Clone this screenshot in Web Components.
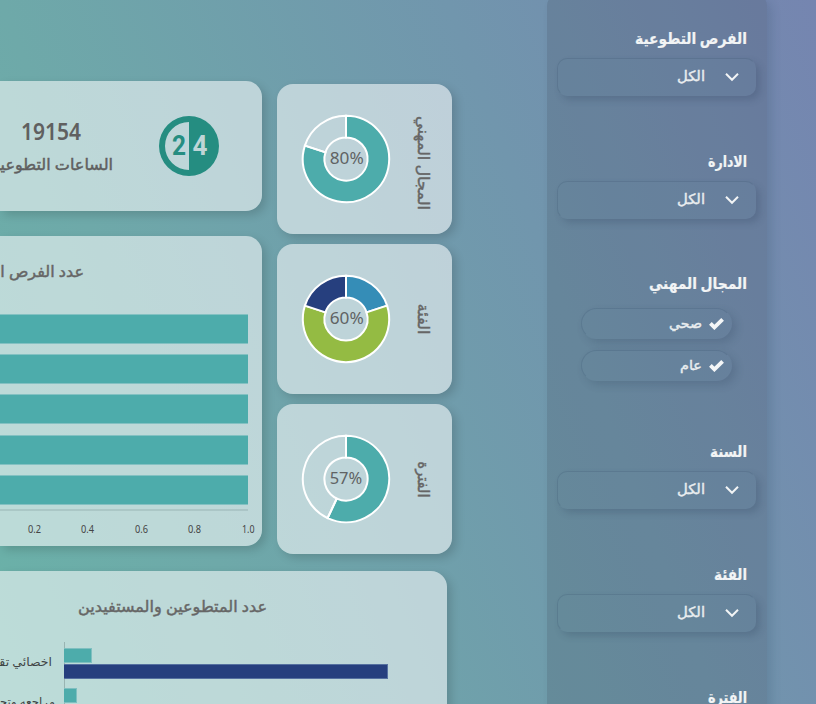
<!DOCTYPE html>
<html lang="ar">
<head>
<meta charset="utf-8">
<title>لوحة التطوع</title>
<style>
html,body{margin:0;height:704px;overflow:hidden}
body{font-family:"Noto Sans","DejaVu Sans",sans-serif}
</style>
</head>
<body>
<volunteer-dashboard></volunteer-dashboard>
<script>
const define = (name, build) => customElements.define(name, class extends HTMLElement {
  connectedCallback() {
    if (this.shadowRoot) return;
    this.attachShadow({ mode: 'open' }).innerHTML = build(k => this.getAttribute(k) || '');
  }
});

// One line of text fitted to a given width; b is the baseline offset, h the line box, s an outline that thickens strokes.
define('fit-text', a => `<style>
:host{display:block;flex:none;width:${a('w')}px;height:${a('h')}px}
svg{display:block;overflow:visible}
text{font:${a('weight') || 400} ${a('size')}px "Noto Sans","DejaVu Sans",sans-serif;fill:currentColor;stroke:currentColor;stroke-width:${a('s') || 0}px}
</style><svg width="${a('w')}" height="${a('h')}"><text x="0" y="${a('b')}" textLength="${a('w')}" lengthAdjust="spacingAndGlyphs">${a('text')}</text></svg>`);

define('glass-card', () => `<style>
:host{display:block;box-sizing:border-box;border-radius:16px;background:rgba(255,255,255,.55);box-shadow:4px 4px 10px rgba(0,0,0,.15);color:#666}
</style><slot></slot>`);

define('filter-group', a => `<style>
:host{display:block}
.head{display:flex;justify-content:flex-end;padding-right:20px;height:30px;color:#f2f4f5}
</style><div class="head"><fit-text text="${a('label')}" w="${a('w')}" h="22" b="16" size="16" weight="700" s=".2"></fit-text></div><slot></slot>`);

define('select-box', () => `<style>
:host{display:flex;box-sizing:border-box;width:199px;height:38px;margin-left:10px;padding:0 16px 0 0;align-items:center;justify-content:flex-end;gap:20px;border:1px solid rgba(50,75,100,.2);border-right-color:transparent;border-bottom-color:transparent;border-radius:10px;background:rgba(105,140,165,.08);box-shadow:4px 4px 7px rgba(40,60,85,.22);color:#e9edef}
</style><fit-text text="الكل" w="28" h="20" b="14" size="14" s=".4"></fit-text>
<svg width="14" height="10" viewBox="0 0 14 10" fill="none" stroke="#f2f4f5" stroke-width="2"><path d="M1 1.8l6 6 6-6"/></svg>`);

define('check-pill', a => `<style>
:host{display:flex;box-sizing:border-box;width:151px;height:31px;margin:5px 0 11px 34px;padding-right:7px;align-items:center;justify-content:flex-end;gap:7px;border:1px solid rgba(50,75,100,.2);border-right-color:transparent;border-bottom-color:transparent;border-radius:16px;background:rgba(105,140,165,.06);box-shadow:4px 4px 8px rgba(40,60,85,.2);color:#e9edef}
:host(:last-of-type){margin-top:0}
</style><fit-text text="${a('label')}" w="${a('w')}" h="20" b="14" size="13.5" s=".4"></fit-text>
<svg width="15" height="12" viewBox="0 0 15 12" fill="none" stroke="#f4f6f7" stroke-width="3.8"><path d="M1.4 5.4l4 4L13.6 1.4"/></svg>`);

define('donut-card', a => {
  const cuts = a('cuts').split(',').map(Number), fills = a('fills').split(',');
  const pt = (f, r) => { const t = f * Math.PI * 2; return (44 + r * Math.sin(t)).toFixed(2) + ' ' + (44 - r * Math.cos(t)).toFixed(2); };
  let from = 0, seg = '';
  cuts.forEach((to, i) => {
    const big = to - from > .5 ? 1 : 0;
    seg += `<path fill="${fills[i]}" d="M${pt(from, 43.2)}A43.2 43.2 0 ${big} 1 ${pt(to, 43.2)}L${pt(to, 21.6)}A21.6 21.6 0 ${big} 0 ${pt(from, 21.6)}Z"/>`;
    from = to;
  });
  return `<style>
:host{display:block}
glass-card{width:175px;height:150px;display:grid;grid-template-columns:88px 30px;column-gap:21px;padding-left:25.3px;align-items:center}
svg{display:block;overflow:visible}
.name{font:400 15.5px "Noto Sans","DejaVu Sans",sans-serif;fill:#666;stroke:#666;stroke-width:.4px}
.pct{font:400 16.5px "Noto Sans",sans-serif;fill:#606364}
</style><glass-card>
<svg width="88" height="88"><g stroke="#fff" stroke-width="2">${seg}</g><text class="pct" x="27.7" y="49.3" textLength="${a('pw')}" lengthAdjust="spacingAndGlyphs">${a('value')}</text></svg>
<svg width="30" height="150"><text class="name" transform="translate(7.2 ${a('y')}) rotate(90)" textLength="${a('w')}" lengthAdjust="spacingAndGlyphs">${a('label')}</text></svg>
</glass-card>`;
});

define('clock-icon', () => `<style>:host{display:block;flex:none}svg{display:block}text{font:700 28px Roboto,sans-serif}</style>
<svg width="60" height="60"><path fill="#258d81" fill-rule="evenodd" d="M30 0A30 30 0 0 1 30 60A30 30 0 0 1 30 0ZM30 6A24 24 0 0 0 30 54Z"/>
<text x="13" y="39" fill="#258d81" textLength="14" lengthAdjust="spacingAndGlyphs">2</text><text x="33.5" y="39" fill="#bfd5d7" textLength="15" lengthAdjust="spacingAndGlyphs">4</text></svg>`);

define('stat-card', () => `<style>
:host{display:block}
glass-card{height:130px;width:262px;border-radius:0 16px 16px 0;display:flex;justify-content:flex-end;padding:35px 43px 0 0;gap:46px}
.copy{display:flex;flex-direction:column;width:113px;align-items:flex-end;color:#606060}
.num{align-self:flex-start;padding-left:21px}
</style><glass-card><div class="copy"><div class="num"><fit-text text="19154" w="60" h="32" b="23.5" size="23" weight="600"></fit-text></div>
<fit-text text="الساعات التطوعية" w="121" h="24" b="22" size="15.5" s=".45"></fit-text></div><clock-icon></clock-icon></glass-card>`);

define('hours-chart', () => `<style>
:host{display:block}
glass-card{height:310px;width:262px;border-radius:0 16px 16px 0;padding-top:25px}
.title{display:flex;justify-content:flex-end;width:83.5px;height:52.5px}
.bars{display:grid;grid-auto-rows:30px;row-gap:10.35px;width:248px;height:195px;border-bottom:2px solid rgba(90,115,115,.18)}
.bars i{background:#4dacab;border-block:1px solid #83c1c2;box-sizing:border-box}
.ticks{display:grid;grid-template-columns:repeat(5,53.3px);width:266px;padding-left:8px;margin-top:9px;justify-items:center;color:#444}
</style><glass-card><div class="title"><fit-text text="عدد الفرص التطوعية" w="138" h="24" b="16" size="15.5" s=".45"></fit-text></div>
<div class="bars"><i></i><i></i><i></i><i></i><i></i></div>
<div class="ticks">${['0.2', '0.4', '0.6', '0.8', '1.0'].map(t => `<fit-text text="${t}" w="${t === '1.0' ? 12.5 : 13}" h="16" b="12.7" size="11.2"></fit-text>`).join('')}</div></glass-card>`);

define('people-chart', () => `<style>
:host{display:block}
glass-card{height:190px;width:447px;border-radius:0 16px 0 0;padding-top:25px}
.title{padding-left:78px;height:46px}
.plot{display:grid;grid-template-columns:63.5px 1fr;height:120px}
.names{display:flex;flex-direction:column;align-items:flex-end;color:#3f4444}
.names div{height:40.3px;display:flex;justify-content:flex-end}
.names .a{padding-right:11.5px}.names .b{padding-right:8.5px}
.rows{border-left:1px solid rgba(90,110,110,.35);padding-top:6px;display:grid;grid-auto-rows:15px;row-gap:.9px;align-content:start}
.rows i{background:#4dacab;width:27.5px;margin-left:-.5px;box-sizing:border-box;border:1px solid #7fbfc0;border-left:0}
.rows .n{background:#263f7e;width:324px;border-color:#5570a0}
.rows .s{width:12.5px;margin-top:8.5px;height:15px}
</style><glass-card><div class="title"><fit-text text="عدد المتطوعين والمستفيدين" w="189" h="24" b="16" size="15.5" s=".45"></fit-text></div>
<div class="plot"><div class="names"><div class="a"><fit-text text="اخصائي تقديم" w="71" h="20" b="24" size="12"></fit-text></div><div class="b"><fit-text text="مراجعه وتحديث" w="76" h="20" b="24" size="12"></fit-text></div></div>
<div class="rows"><i></i><i class="n"></i><i class="s"></i></div></div></glass-card>`);

define('filter-panel', () => `<style>
:host{display:block;box-sizing:border-box;width:220px;height:730px;margin-top:-6px;padding-top:34px;border-radius:12px;background:rgba(60,70,85,.2);box-shadow:5px 5px 10px rgba(40,60,90,.16)}
.list{display:grid;grid-template-rows:123px 122px 168px 123px 123px 60px}
</style><div class="list">
<filter-group label="الفرص التطوعية" w="112"><select-box></select-box></filter-group>
<filter-group label="الادارة" w="39"><select-box></select-box></filter-group>
<filter-group label="المجال المهني" w="98"><check-pill label="صحي" w="33"></check-pill><check-pill label="عام" w="22"></check-pill></filter-group>
<filter-group label="السنة" w="37"><select-box></select-box></filter-group>
<filter-group label="الفئة" w="33"><select-box></select-box></filter-group>
<filter-group label="الفترة" w="39"><select-box></select-box></filter-group>
</div>`);

define('volunteer-dashboard', () => `<style>
:host{display:grid;grid-template-columns:547px 220px;width:816px;height:704px;overflow:hidden;background:linear-gradient(69deg,#6ab2a8 0%,#6ea9a9 25%,#7196ad 66%,#7585b0 100%)}
main{display:grid;grid-template-columns:262px 175px;grid-template-rows:571px 190px;column-gap:15px}
.charts{display:flex;flex-direction:column;gap:25px;padding-top:81px}
.donuts{display:flex;flex-direction:column;gap:10px;padding-top:84px}
people-chart{grid-column:1/3}
</style><main><div class="charts"><stat-card></stat-card><hours-chart></hours-chart></div>
<div class="donuts">
<donut-card label="المجال المهني" w="94" y="32" value="80%" pw="34" cuts="0.8,1" fills="#4dacab,none"></donut-card>
<donut-card label="الفئة" w="31" y="59.5" value="60%" pw="34" cuts="0.2,0.8,1" fills="#358db7,#94bb43,#263f7e"></donut-card>
<donut-card label="الفترة" w="36" y="57.5" value="57%" pw="32.5" cuts="0.57,1" fills="#4dacab,none"></donut-card>
</div><people-chart></people-chart></main><filter-panel></filter-panel>`);
</script>
</body>
</html>
